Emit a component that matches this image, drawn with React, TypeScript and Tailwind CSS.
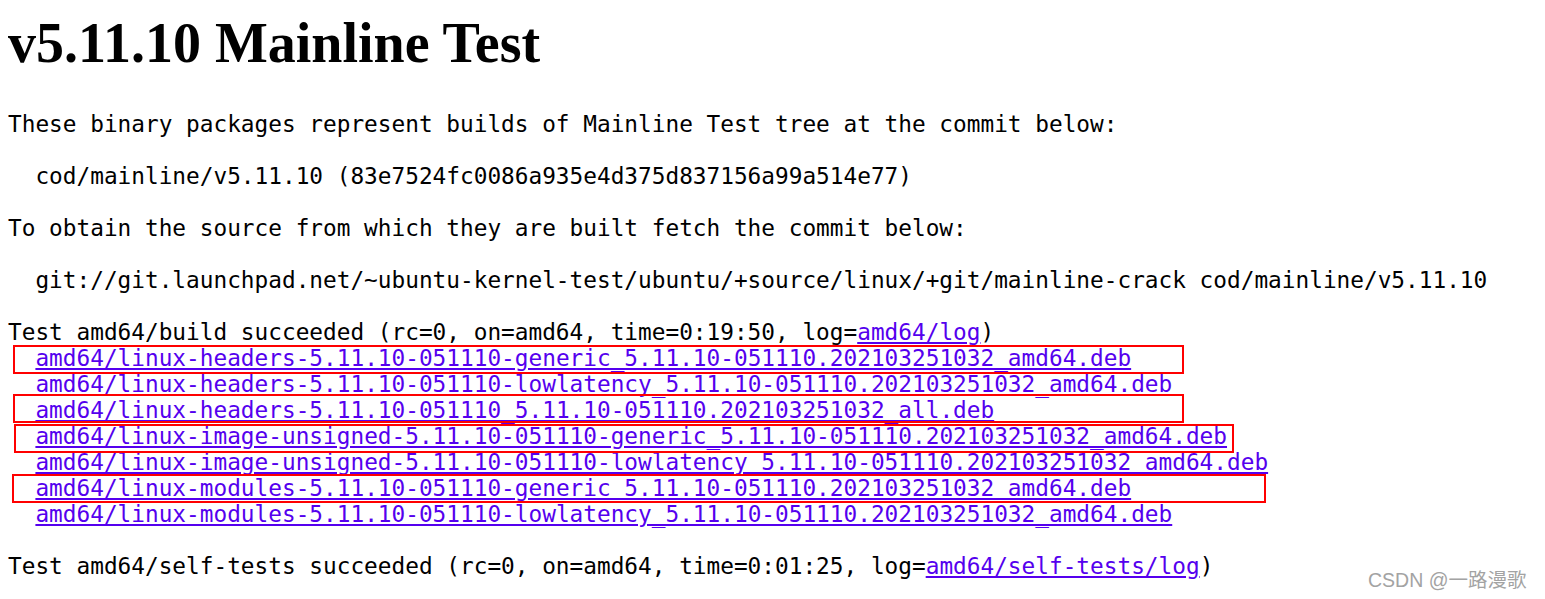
import React from "react";

const mono = "font-['DejaVu_Sans_Mono',monospace] text-[22.75px] leading-[26px] whitespace-pre";

const links = [
  "amd64/linux-headers-5.11.10-051110-generic_5.11.10-051110.202103251032_amd64.deb",
  "amd64/linux-headers-5.11.10-051110-lowlatency_5.11.10-051110.202103251032_amd64.deb",
  "amd64/linux-headers-5.11.10-051110_5.11.10-051110.202103251032_all.deb",
  "amd64/linux-image-unsigned-5.11.10-051110-generic_5.11.10-051110.202103251032_amd64.deb",
  "amd64/linux-image-unsigned-5.11.10-051110-lowlatency_5.11.10-051110.202103251032_amd64.deb",
  "amd64/linux-modules-5.11.10-051110-generic_5.11.10-051110.202103251032_amd64.deb",
  "amd64/linux-modules-5.11.10-051110-lowlatency_5.11.10-051110.202103251032_amd64.deb",
];

function A({ children }: { children: React.ReactNode }) {
  return <a href="#" className="text-[#5500ee] underline">{children}</a>;
}

export default function App() {
  return (
    <div className="relative w-[1545px] h-[599px] overflow-hidden bg-white text-black">
      <h1 className="pl-[8px] pt-[11px] font-['Liberation_Serif',serif] font-bold text-[56px] leading-[64px]">
        v5.11.10 Mainline Test
      </h1>

      <div className={`${mono} pl-[8px] mt-[36px]`}>
        <div>These binary packages represent builds of Mainline Test tree at the commit below:</div>
        <div> </div>
        <div>  cod/mainline/v5.11.10 (83e7524fc0086a935e4d375d837156a99a514e77)</div>
        <div> </div>
        <div>To obtain the source from which they are built fetch the commit below:</div>
        <div> </div>
        <div>  git://git.launchpad.net/~ubuntu-kernel-test/ubuntu/+source/linux/+git/mainline-crack cod/mainline/v5.11.10</div>
        <div> </div>
        <div>
          Test amd64/build succeeded (rc=0, on=amd64, time=0:19:50, log=<A>amd64/log</A>)
        </div>
        {links.map((l) => (
          <div key={l}>
            {"  "}
            <A>{l}</A>
          </div>
        ))}
        <div> </div>
        <div>
          Test amd64/self-tests succeeded (rc=0, on=amd64, time=0:01:25, log=<A>amd64/self-tests/log</A>)
        </div>
      </div>

      {/* red annotation boxes */}
      <div className="absolute left-[13px] top-[345px] w-[1171px] h-[29px] border-2 border-[#ff0000]" />
      <div className="absolute left-[13px] top-[394px] w-[1171px] h-[29px] border-2 border-[#ff0000]" />
      <div className="absolute left-[14px] top-[424px] w-[1220px] h-[29px] border-2 border-[#ff0000]" />
      <div className="absolute left-[12px] top-[474px] w-[1254px] h-[29px] border-2 border-[#ff0000]" />

      {/* watermark */}
      <div className="absolute left-[1368px] top-[568px] text-[19.5px] leading-[24px] text-[#a3a3a3] font-['Liberation_Sans','Noto_Sans_CJK_SC',sans-serif]">
        CSDN @一路漫歌
      </div>
    </div>
  );
}
